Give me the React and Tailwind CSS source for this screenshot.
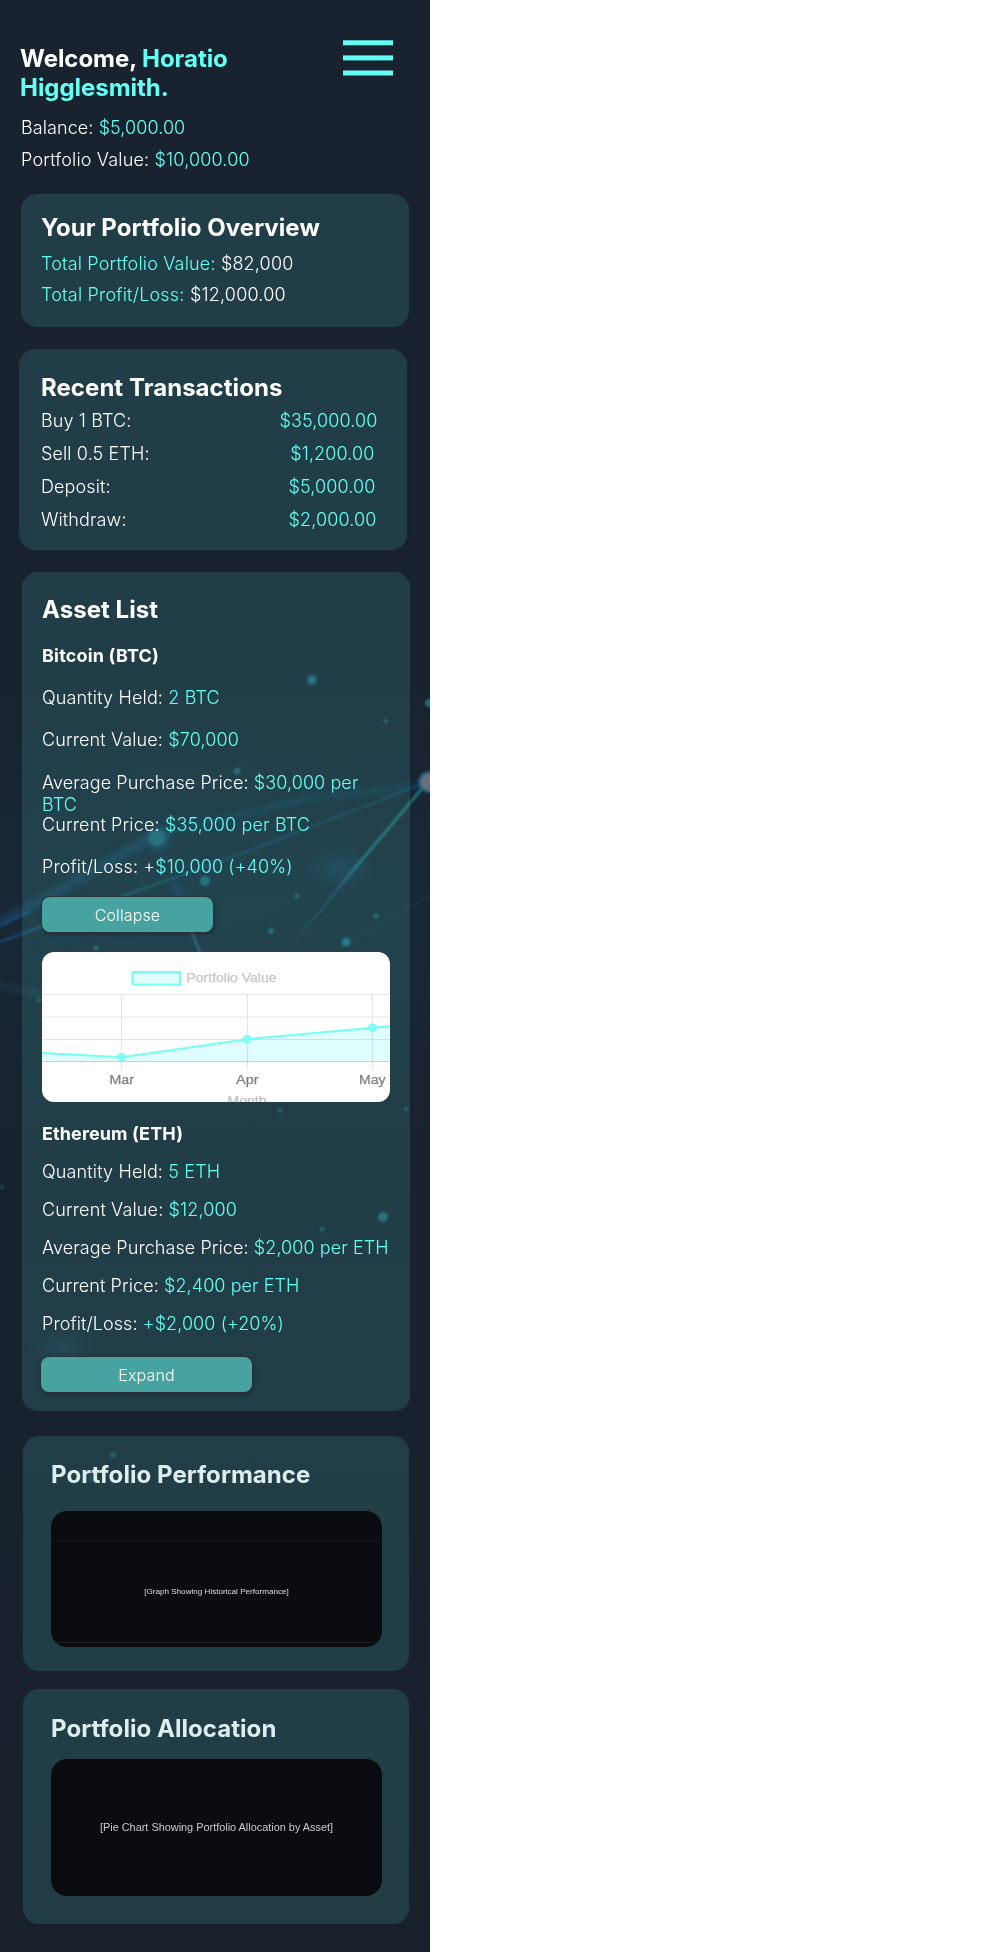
const cyan = "text-[#64fff5]";

function Line({ label, value, className = "", tracking = "tracking-[0.080px]" }) {
  return (
    <p className={`text-[18px] leading-[22px] font-light ${tracking} ${className}`}>
      {label} <span className={cyan}>{value}</span>
    </p>
  );
}

function Card({ className, children }) {
  return (
    <section className={`rounded-2xl bg-[#45a3a6]/21 shadow-[0_0_2px_1px_rgba(40,35,50,0.35)] ${className}`}>
      {children}
    </section>
  );
}

function Title({ className = "", children }) {
  return <h2 className={`text-[24px] leading-[29px] font-bold tracking-[0.050px] ${className}`}>{children}</h2>;
}

const DOTS = [
  [312, 680, 5, 0.6], [386, 721, 2, 0.6], [429, 703, 4, 0.7], [237, 771, 3.5, 0.5],
  [205, 881, 5, 0.6], [297, 896, 2.2, 0.6], [376, 916, 2.5, 0.6], [271, 931, 2.7, 0.6],
  [346, 942, 4.5, 0.7], [96, 948, 2.4, 0.6], [39, 1000, 1.8, 0.6], [280, 1110, 1.9, 0.6],
  [406, 1109, 1.9, 0.6], [2, 1187, 1.6, 0.5], [383, 1217, 5, 0.6], [322, 1229, 2.2, 0.55],
  [113, 1455, 3, 0.4], [93, 1478, 5, 0.25],
];

function Network() {
  return (
    <svg className="absolute inset-0 -z-10" width="430" height="1952" viewBox="0 0 430 1952">
      <defs>
        <linearGradient id="wide" gradientUnits="userSpaceOnUse" x1="0" y1="925" x2="430" y2="780">
          <stop offset="0" stopColor="#1c5c94" />
          <stop offset="0.3" stopColor="#1f7290" stopOpacity="0.8" />
          <stop offset="0.5" stopColor="#1c5f8a" stopOpacity="0.55" />
          <stop offset="1" stopColor="#1c5680" stopOpacity="0.7" />
        </linearGradient>
        <linearGradient id="ray" x1="1" y1="0" x2="0" y2="1">
          <stop offset="0" stopColor="#28808a" />
          <stop offset="0.5" stopColor="#227680" />
          <stop offset="0.65" stopColor="#1c5f80" stopOpacity="0.5" />
          <stop offset="1" stopColor="#1c5f80" stopOpacity="0" />
        </linearGradient>
        <radialGradient id="glow">
          <stop offset="0" stopColor="#1d4a6c" stopOpacity="0.5" />
          <stop offset="1" stopColor="#1d4a6c" stopOpacity="0" />
        </radialGradient>
        <filter id="b1" x="-50%" y="-50%" width="200%" height="200%"><feGaussianBlur stdDeviation="0.8" /></filter>
        <filter id="b4" x="-50%" y="-50%" width="200%" height="200%"><feGaussianBlur stdDeviation="3.5" /></filter>
      </defs>
      <ellipse cx="215" cy="880" rx="330" ry="190" fill="url(#glow)" opacity="0.2" />
      <ellipse cx="340" cy="868" rx="34" ry="22" fill="url(#glow)" />
      <ellipse cx="62" cy="1346" rx="36" ry="18" fill="url(#glow)" opacity="0.7" />
      <g filter="url(#b4)" fill="none" stroke="#1b4a6c">
        <path d="M-5 925 L60 890 L155 835" strokeWidth="8" opacity="0.65" />
        <path d="M155 835 L300 800 L425 785" strokeWidth="5" opacity="0.5" />
        <path d="M-5 952 L200 915" strokeWidth="4" opacity="0.2" />
        <path d="M-5 985 L60 998" strokeWidth="7" opacity="0.35" />
        <path d="M170 880 L185 900" strokeWidth="8" opacity="0.4" />
      </g>
      <g filter="url(#b1)" fill="none">
        <path d="M0 942 L120 897 L230 858 L425 783" stroke="url(#wide)" strokeWidth="1.600" />
        <path d="M0 925 L30 911" stroke="#1e6aa5" strokeWidth="2.500" opacity="0.4" />
        <path d="M425 785 L345 880 L285 955" stroke="url(#ray)" strokeWidth="2.500" />
        <path d="M191 930 L201 955" stroke="#2b94a0" strokeWidth="1.800" opacity="0.7" />
        <path d="M346 945 L430 895" stroke="#1f4d68" strokeWidth="1.500" opacity="0.35" />
      </g>
      <circle cx="158" cy="838" r="10" fill="#1f6a8e" opacity="0.7" filter="url(#b4)" />
      <circle cx="157" cy="838" r="8" fill="#257883" opacity="0.5" filter="url(#b1)" />
      <circle cx="429" cy="782" r="11" fill="#1f5c78" filter="url(#b1)" />
      <circle cx="429" cy="782" r="8.5" fill="#66707b" filter="url(#b1)" />
      <g filter="url(#b1)" fill="#2490a0">
        {DOTS.map(([x, y, r, o]) => (
          <circle key={`${x}-${y}`} cx={x} cy={y} r={r} opacity={o} />
        ))}
      </g>
    </svg>
  );
}

function Chart() {
  return (
    <svg className="mt-[20px] block rounded-xl bg-white" width="348" height="150" viewBox="0 0 348 150">
      <path d="M0 101 L79.500 105.200 L205 87.200 L330.500 75.700 L348 74.200 V109.500 H0 Z" fill="#dffdfc" />
      <g stroke="#000" strokeOpacity="0.1" strokeWidth="1.200">
        <path d="M0 42.500H348M0 65H348M0 87.500H348M79.500 42V118M205.500 42V118M330.500 42V118" />
        <path d="M0 109.500H348" strokeOpacity="0.18" />
      </g>
      <path d="M0 101 L79.500 105.200 L205 87.200 L330.500 75.700 L348 74.200" fill="none" stroke="#73fff3" strokeWidth="2" />
      <g fill="#64fff5" fillOpacity="0.4" stroke="#73fff3" strokeWidth="1.600">
        <ellipse cx="79.500" cy="105.200" rx="4" ry="3.300" />
        <ellipse cx="205" cy="87.200" rx="4" ry="3.300" />
        <ellipse cx="330.500" cy="75.700" rx="4" ry="3.300" />
      </g>
      <rect x="90.500" y="20" width="47.500" height="12.500" fill="#dffdfc" stroke="#73fff3" strokeWidth="2" />
      <g fontFamily="Liberation Sans, sans-serif" fontSize="12" fill="#808080" stroke="#808080" strokeWidth="0.250">
        <text x="144.500" y="29.500" fill="#c6c6c6" stroke="#c6c6c6" textLength="90" lengthAdjust="spacingAndGlyphs">Portfolio Value</text>
        <text x="67.500" y="132" textLength="24.500" lengthAdjust="spacingAndGlyphs">Mar</text>
        <text x="194" y="132" textLength="22.500" lengthAdjust="spacingAndGlyphs">Apr</text>
        <text x="317" y="132" textLength="26.500" lengthAdjust="spacingAndGlyphs">May</text>
        <text x="185.500" y="153" fill="#c0c0c0" stroke="#c0c0c0" textLength="39" lengthAdjust="spacingAndGlyphs">Month</text>
      </g>
    </svg>
  );
}

const buttonBase =
  "flex h-[35px] items-center justify-center rounded-lg bg-[#47a3a0] pt-px text-[16px] leading-[19px] font-light tracking-[0.120px] shadow-[0_0_0_1px_#2b3338,1px_2px_4px_rgba(0,0,0,0.3)]";

const TRANSACTIONS = [
  ["Buy 1 BTC:", "$35,000.00", "mr-[29.500px]"],
  ["Sell 0.5 ETH:", "$1,200.00", "mr-[32.500px]"],
  ["Deposit:", "$5,000.00", "mr-[31.500px]"],
  ["Withdraw:", "$2,000.00", "mr-[30.500px]"],
];

export default function App() {
  return (
    <div className="min-h-[1952px] bg-white">
      <main className="relative isolate h-[1952px] w-[430px] overflow-hidden bg-[linear-gradient(180deg,#18232f_0%,#18232f_35%,#182735_47%,#18232f_58%,#19212c_100%)] font-['Inter',sans-serif] text-white">
        <Network />

        <header className="flex h-[194px] items-start justify-between pt-[40px] pr-[37px] pl-[20px]">
          <div className="pt-1">
            <h1 className="w-[270px] text-[24px] leading-[29px] font-bold tracking-[-0.050px]">
              Welcome, <span className={cyan}>Horatio Higglesmith.</span>
            </h1>
            <Line className="mt-[15px] ml-px" label="Balance:" value="$5,000.00" />
            <Line className="mt-[10px] ml-px" tracking="tracking-[0.170px]" label="Portfolio Value:" value="$10,000.00" />
          </div>
          <button aria-label="Menu">
            <svg width="50" height="37" viewBox="0 0 50 37" fill="#64fff5">
              <rect y="0.300" width="50" height="5" />
              <rect y="15.400" width="50" height="5" />
              <rect y="30.500" width="50" height="5" />
            </svg>
          </button>
        </header>

        <Card className="ml-[21px] h-[133px] w-[388px] pt-[19px] pl-[20px]">
          <Title>Your Portfolio Overview</Title>
          <p className="mt-[11px] text-[18px] leading-[22px] font-light tracking-[0.170px]">
            <span className={cyan}>Total Portfolio Value:</span> $82,000
          </p>
          <p className="mt-[9px] text-[18px] leading-[22px] font-light tracking-[0.200px]">
            <span className={cyan}>Total Profit/Loss:</span> $12,000.00
          </p>
        </Card>

        <Card className="mt-[22px] ml-[19px] h-[201px] w-[388px] pt-[24px] pl-[22px]">
          <Title>Recent Transactions</Title>
          <ul className="mt-[8px] flex flex-col gap-[11px] text-[18px] leading-[22px] font-light tracking-[0.120px]">
            {TRANSACTIONS.map(([label, amount, inset]) => (
              <li key={label} className="flex justify-between">
                <span>{label}</span>
                <span className={`${cyan} ${inset}`}>{amount}</span>
              </li>
            ))}
          </ul>
        </Card>

        <Card className="mt-[22px] ml-[22px] h-[839px] w-[388px] pt-[23px] pl-[20px]">
          <Title>Asset List</Title>
          <h3 className="mt-[21px] text-[18px] leading-[22px] font-bold tracking-[0.180px]">Bitcoin (BTC)</h3>
          <div className="mt-[20px] flex flex-col">
            <Line className="h-[42.250px]" tracking="tracking-[0.150px]" label="Quantity Held:" value="2 BTC" />
            <Line className="h-[42.250px]" tracking="tracking-[0.120px]" label="Current Value:" value="$70,000" />
            <Line className="h-[42.250px] w-[348px]" label="Average Purchase Price:" value="$30,000 per BTC" />
            <Line className="h-[42.250px]" tracking="tracking-[0.140px]" label="Current Price:" value="$35,000 per BTC" />
            <p className="text-[18px] leading-[22px] font-light tracking-[0.120px]">
              Profit/Loss: +<span className={cyan}>$10,000 (+40%)</span>
            </p>
          </div>
          <button className={`mt-[19px] w-[171px] ${buttonBase}`}>Collapse</button>
          <Chart />
          <h3 className="mt-[21px] text-[18px] leading-[22px] font-bold tracking-[0.100px]">Ethereum (ETH)</h3>
          <div className="mt-[16px] flex flex-col gap-[16px] whitespace-nowrap">
            <Line tracking="tracking-[0.150px]" label="Quantity Held:" value="5 ETH" />
            <Line tracking="tracking-[0.140px]" label="Current Value:" value="$12,000" />
            <Line label="Average Purchase Price:" value="$2,000 per ETH" />
            <Line label="Current Price:" value="$2,400 per ETH" />
            <Line label="Profit/Loss:" value="+$2,000 (+20%)" />
          </div>
          <button className={`mt-[22px] -ml-px w-[211px] ${buttonBase}`}>Expand</button>
        </Card>

        <Card className="mt-[25px] ml-[23px] h-[235px] w-[386px] pt-[24px] pl-[28px]">
          <Title className="text-[#dcefee]">Portfolio Performance</Title>
          <div className="mt-[22px] flex h-[136px] w-[331px] flex-col items-center justify-between overflow-hidden rounded-2xl bg-[#0a0c10] pt-[29px] pb-[4px] font-['Liberation_Sans',sans-serif] text-[8.120px] leading-[10px] text-[#dcdddd]">
            <div className="h-[2px] w-full bg-[#101216]" />
            <p className="-mt-px">[Graph Showing Historical Performance]</p>
            <div className="h-px w-full bg-[#1a1c20]" />
          </div>
        </Card>

        <Card className="mt-[18px] ml-[23px] h-[235px] w-[386px] pt-[25px] pl-[28px]">
          <Title className="text-[#dcefee]">Portfolio Allocation</Title>
          <div className="mt-[16px] flex h-[137px] w-[331px] items-center justify-center rounded-2xl bg-[#0a0c10] font-['Liberation_Sans',sans-serif] text-[10.900px] leading-[13px] text-[#c9cacb]">
            [Pie Chart Showing Portfolio Allocation by Asset]
          </div>
        </Card>
      </main>
    </div>
  );
}
